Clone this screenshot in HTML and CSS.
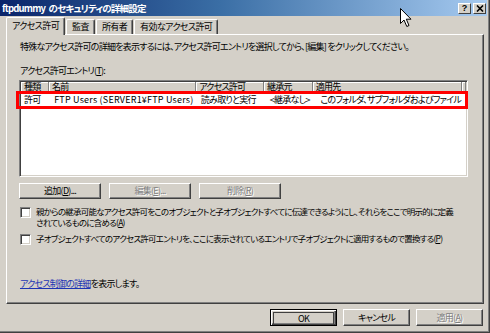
FILE: index.html
```html
<!DOCTYPE html>
<html>
<head>
    <meta charset="UTF-8">
    <title>ftpdummy のセキュリティの詳細設定</title>
    <link rel="stylesheet" href="styles.css">
</head>
<body>
<div class="window">
    <div class="titlebar">
        <span class="title">ftpdummy のセキュリティの詳細設定</span>
        <div class="title-buttons">
            <span class="tbtn">?</span>
            <span class="tbtn">
                <svg width="8" height="7" viewBox="0 0 8 7"><path d="M1 0.5 L7 6.5 M7 0.5 L1 6.5" stroke="#000" stroke-width="1.6"/></svg>
            </span>
        </div>
    </div>

    <div class="tabs">
        <div class="tab active">アクセス許可</div>
        <div class="tab">監査</div>
        <div class="tab">所有者</div>
        <div class="tab">有効なアクセス許可</div>
    </div>

    <div class="panel">
        <p class="desc">特殊なアクセス許可の詳細を表示するには、アクセス許可エントリを選択してから、[編集] をクリックしてください。</p>
        <p class="label">アクセス許可エントリ(<u>T</u>):</p>

        <div class="list">
            <div class="list-head">
                <span class="col c1">種類</span>
                <span class="col c2">名前</span>
                <span class="col c3">アクセス許可</span>
                <span class="col c4">継承元</span>
                <span class="col c5">適用先</span>
                <span class="col c6"></span>
            </div>
            <div class="list-row">
                <span class="col c1">許可</span>
                <span class="col c2 latin">FTP Users (SERVER1¥FTP Users)</span>
                <span class="col c3">読み取りと実行</span>
                <span class="col c4">&lt;継承なし&gt;</span>
                <span class="col c5">このフォルダ、サブフォルダおよびファイル</span>
            </div>
        </div>

        <div class="list-buttons">
            <button class="btn">追加(<u>D</u>)...</button>
            <button class="btn disabled">編集(<u>E</u>)...</button>
            <button class="btn disabled">削除(<u>R</u>)</button>
        </div>

        <div class="check">
            <span class="box"></span>
            <span class="check-text">親からの継承可能なアクセス許可をこのオブジェクトと子オブジェクトすべてに伝達できるようにし、それらをここで明示的に定義<br>されているものに含める(<u>A</u>)</span>
        </div>
        <div class="check check2">
            <span class="box"></span>
            <span class="check-text">子オブジェクトすべてのアクセス許可エントリを、ここに表示されているエントリで子オブジェクトに適用するもので置換する(<u>P</u>)</span>
        </div>

        <p class="more"><a href="#">アクセス制御の詳細</a>を表示します。</p>
    </div>

    <div class="footer">
        <button class="btn default"><span class="focus">OK</span></button>
        <button class="btn">キャンセル</button>
        <button class="btn disabled">適用(<u>A</u>)</button>
    </div>

    <!-- 強調用の赤枠 -->
    <div class="highlight"></div>

    <svg class="cursor" width="13" height="20" viewBox="0 0 13 20">
        <path d="M0.5 0.5 L0.5 15.5 L4 12 L6.8 18.5 L9 17.5 L6.3 11.2 L11 11.2 Z" fill="#fff" stroke="#000" stroke-width="1"/>
    </svg>
</div>
</body>
</html>
```

FILE: styles.css
```css
body {
    margin: 0;
    font-family: "Noto Sans CJK JP", "Liberation Sans", sans-serif;
    font-size: 9px;
    letter-spacing: -0.75px;
    font-feature-settings: "palt";
    color: #000;
    background: #d4d0c8;
}
p {
    margin: 0;
}
.window {
    position: relative;
    width: 490px;
    height: 333px;
    box-sizing: border-box;
    background: #d4d0c8;
    border-right: 1px solid #404040;
    border-bottom: 1px solid #404040;
    box-shadow: inset -1px -1px #808080;
    overflow: hidden;
}
.titlebar {
    display: flex;
    align-items: center;
    justify-content: space-between;
    height: 16px;
    margin-right: 2px;
    background: linear-gradient(to right, #0a246a, #3a6ea5 45%, #a6caf0);
}
.title {
    padding-left: 2px;
    color: #fff;
    font-weight: bold;
    font-size: 9.5px;
    letter-spacing: -0.8px;
    word-spacing: 2px;
    white-space: nowrap;
}
.title-buttons {
    display: flex;
    gap: 2px;
    padding-right: 1px;
}
.tbtn {
    display: flex;
    align-items: center;
    justify-content: center;
    width: 13px;
    height: 11px;
    box-sizing: border-box;
    background: #d4d0c8;
    border: 1px solid;
    border-color: #fff #404040 #404040 #fff;
    font-weight: bold;
    font-size: 9px;
    line-height: 9px;
    letter-spacing: 0;
    font-family: "Liberation Sans", sans-serif;
}
.tabs {
    display: flex;
    align-items: flex-end;
    height: 18px;
    padding-left: 6px;
    position: relative;
    z-index: 1;
}
.tab {
    height: 14px;
    line-height: 14px;
    padding: 0 5px;
    margin-right: 1px;
    letter-spacing: -0.6px;
    background: #d4d0c8;
    border: 1px solid;
    border-color: #fff #404040 transparent #fff;
    border-bottom: none;
    border-radius: 2px 2px 0 0;
    box-shadow: inset -1px 0 #808080;
    white-space: nowrap;
}
.tab.active {
    height: 17px;
    line-height: 16px;
    margin-bottom: -1px;
}
.panel {
    margin: 0 5px 0 6px;
    height: 270px;
    box-sizing: border-box;
    padding: 6px 0 0 13px;
    border: 1px solid;
    border-color: #fff #404040 #404040 #fff;
    box-shadow: inset -1px -1px #808080;
}
.desc {
    line-height: 12px;
    white-space: nowrap;
}
.label {
    margin-top: 12px;
    line-height: 12px;
}
.list {
    margin-top: 3px;
    margin-left: -1px;
    width: 449px;
    height: 97px;
    box-sizing: border-box;
    background: #fff;
    border: 1px solid;
    border-color: #808080 #fff #fff #808080;
    box-shadow: inset 1px 1px #404040, inset -1px -1px #d4d0c8;
    padding: 1px;
}
.list-head,
.list-row {
    display: flex;
    white-space: nowrap;
}
.list-head .col {
    height: 11px;
    line-height: 10px;
    box-sizing: border-box;
    background: #d4d0c8;
    border-right: 1px solid #808080;
    border-bottom: 1px solid #808080;
    box-shadow: inset 1px 1px #fff;
    padding-left: 3px;
}
.list-row {
    height: 13px;
    line-height: 14px;
}
.list-row .col {
    padding-left: 3px;
    overflow: hidden;
}
.latin {
    letter-spacing: 0.2px;
}
.c1 { width: 28px; }
.c2 { width: 148px; }
.c3 { width: 68px; }
.c4 { width: 49px; }
.c5 { width: 150px; }
.c6 { flex: 1; }
.list-buttons {
    display: flex;
    gap: 8px;
    margin-top: 6px;
    margin-left: -1px;
}
.btn {
    height: 16px;
    box-sizing: border-box;
    padding: 0;
    font: inherit;
    letter-spacing: inherit;
    line-height: 12px;
    background: #d4d0c8;
    border: 1px solid;
    border-color: #fff #404040 #404040 #fff;
    box-shadow: inset -1px -1px #808080;
    color: #000;
}
.list-buttons .btn {
    width: 82px;
}
.btn.disabled {
    color: #808080;
    text-shadow: 1px 1px #fff;
}
.check {
    display: flex;
    align-items: flex-start;
    gap: 5px;
    margin-top: 7px;
    line-height: 11px;
    white-space: nowrap;
}
.check-text {
    font-size: 8.5px;
    letter-spacing: -0.75px;
}
.check2 {
    margin-top: 5px;
}
.box {
    width: 11px;
    height: 11px;
    flex: none;
    box-sizing: border-box;
    margin-top: 1px;
    background: #fff;
    border: 1px solid;
    border-color: #808080 #fff #fff #808080;
    box-shadow: inset 1px 1px #404040, inset -1px -1px #d4d0c8;
}
.more {
    margin-top: 33px;
    line-height: 12px;
}
.more a {
    color: #1c34b4;
}
.footer {
    display: flex;
    justify-content: flex-end;
    gap: 6px;
    margin-top: 5px;
    padding-right: 6px;
}
.footer .btn {
    width: 67px;
    height: 17px;
}
.btn.default {
    border: 1px solid #000;
    box-shadow: inset 1px 1px #fff, inset -1px -1px #404040, inset -2px -2px #808080;
    padding: 2px;
}
.focus {
    display: block;
    height: 11px;
    line-height: 11px;
    border: 1px solid #404040;
}
.highlight {
    position: absolute;
    left: 16px;
    top: 91px;
    width: 452px;
    height: 18px;
    box-sizing: border-box;
    border: 3px solid #ff0000;
}
.cursor {
    position: absolute;
    left: 400px;
    top: 8px;
}
```
